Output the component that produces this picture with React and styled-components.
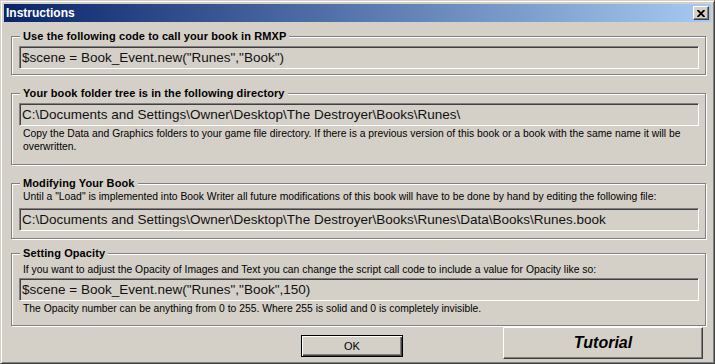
import styled, { createGlobalStyle } from "styled-components";

const GlobalStyle = createGlobalStyle`
  html, body {
    margin: 0;
    padding: 0;
    background: #d4d0c8;
    overflow: hidden;
  }
  * {
    box-sizing: border-box;
  }
`;

const Window = styled.div`
  width: 715px;
  height: 364px;
  background: #d4d0c8;
  border: 1px solid;
  border-color: #d4d0c8 #404040 #404040 #d4d0c8;
  box-shadow: inset 1px 1px 0 #fff, inset -1px -1px 0 #808080;
  padding: 3px;
  display: flex;
  flex-direction: column;
  font-family: "Liberation Sans", Arial, sans-serif;
  color: #000;
`;

const TitleBar = styled.div`
  height: 18px;
  flex: none;
  display: flex;
  align-items: center;
  justify-content: space-between;
  padding: 0 2px 0 2px;
  background: linear-gradient(to right, #0a246a, #a6caf0);
`;

const TitleText = styled.span`
  color: #fff;
  font-weight: bold;
  font-size: 12px;
  line-height: 18px;
`;

const CloseButton = styled.div`
  width: 16px;
  height: 14px;
  display: flex;
  align-items: center;
  justify-content: center;
  background: #d4d0c8;
  border: 1px solid;
  border-color: #fff #404040 #404040 #fff;
  box-shadow: inset -1px -1px 0 #808080;
`;

const Body = styled.div`
  flex: 1;
  display: flex;
  flex-direction: column;
  padding: 0 5px 0 7px;
`;

const Group = styled.fieldset`
  margin: ${(p) => p.$mt}px 0 0;
  padding: ${(p) => p.$pt}px 6px ${(p) => p.$pb}px 7px;
  border: 1px solid #808080;
  box-shadow: 1px 1px 0 #fff, inset 1px 1px 0 #fff;
  min-width: 0;
  display: flex;
  flex-direction: column;
`;

const Legend = styled.legend`
  padding: 0 3px;
  margin-left: 1px;
  background: #d4d0c8;
  font-weight: bold;
  font-size: 11px;
  line-height: 14px;
  letter-spacing: 0.1px;
`;

const Field = styled.div`
  height: 23px;
  margin-top: ${(p) => p.$mt || 0}px;
  display: flex;
  align-items: center;
  padding: 0 2px;
  background: #d4d0c8;
  border: 1px solid;
  border-color: #808080 #fff #fff #808080;
  box-shadow: inset 1px 1px 0 #404040, inset -1px -1px 0 #d4d0c8;
  font-size: 13.5px;
  color: #111;
  white-space: nowrap;
  overflow: hidden;
`;

const Note = styled.p`
  margin: ${(p) => p.$mt || 0}px 0 0;
  font-size: 10.35px;
  line-height: 13px;
  padding-left: 4px;
`;

const Footer = styled.div`
  margin-top: 1px;
  display: flex;
  justify-content: flex-end;
  align-items: flex-start;
  gap: 100px;
  padding-right: 3px;
`;

const OkButton = styled.div`
  width: 102px;
  height: 22px;
  margin-top: 8px;
  display: flex;
  align-items: center;
  justify-content: center;
  border: 1px solid #000;
  box-shadow: inset 1px 1px 0 #fff, inset -1px -1px 0 #404040,
    inset -2px -2px 0 #808080;
  font-size: 11px;
`;

const TutorialButton = styled.div`
  width: 200px;
  height: 32px;
  display: flex;
  align-items: center;
  justify-content: center;
  border: 1px solid;
  border-color: #fff #404040 #404040 #fff;
  box-shadow: inset -1px -1px 0 #808080;
  font-size: 16px;
  font-weight: bold;
  font-style: italic;
`;

export default function App() {
  return (
    <>
      <GlobalStyle />
      <Window>
        <TitleBar>
          <TitleText>Instructions</TitleText>
          <CloseButton>
            <svg width="8" height="7" viewBox="0 0 8 7">
              <path d="M0.5 0L7.5 7M7.5 0L0.5 7" stroke="#000" strokeWidth="1.9" />
            </svg>
          </CloseButton>
        </TitleBar>
        <Body>
          <Group $mt={7} $pt={3} $pb={5}>
            <Legend>Use the following code to call your book in RMXP</Legend>
            <Field>$scene = Book_Event.new("Runes","Book")</Field>
          </Group>
          <Group $mt={11} $pt={3} $pb={11}>
            <Legend>Your book folder tree is in the following directory</Legend>
            <Field>C:\Documents and Settings\Owner\Desktop\The Destroyer\Books\Runes\</Field>
            <Note $mt={1}>
              Copy the Data and Graphics folders to your game file directory. If there is a previous
              version of this book or a book with the same name it will be overwritten.
            </Note>
          </Group>
          <Group $mt={11} $pt={0} $pb={7}>
            <Legend>Modifying Your Book</Legend>
            <Note>
              Until a "Load" is implemented into Book Writer all future modifications of this book
              will have to be done by hand by editing the following file:
            </Note>
            <Field $mt={5}>
              C:\Documents and Settings\Owner\Desktop\The Destroyer\Books\Runes\Data\Books\Runes.book
            </Field>
          </Group>
          <Group $mt={7} $pt={3} $pb={10}>
            <Legend>Setting Opacity</Legend>
            <Note>
              If you want to adjust the Opacity of Images and Text you can change the script call code
              to include a value for Opacity like so:
            </Note>
            <Field $mt={2}>$scene = Book_Event.new("Runes","Book",150)</Field>
            <Note $mt={1}>
              The Opacity number can be anything from 0 to 255. Where 255 is solid and 0 is completely
              invisible.
            </Note>
          </Group>
          <Footer>
            <OkButton>OK</OkButton>
            <TutorialButton>Tutorial</TutorialButton>
          </Footer>
        </Body>
      </Window>
    </>
  );
}
